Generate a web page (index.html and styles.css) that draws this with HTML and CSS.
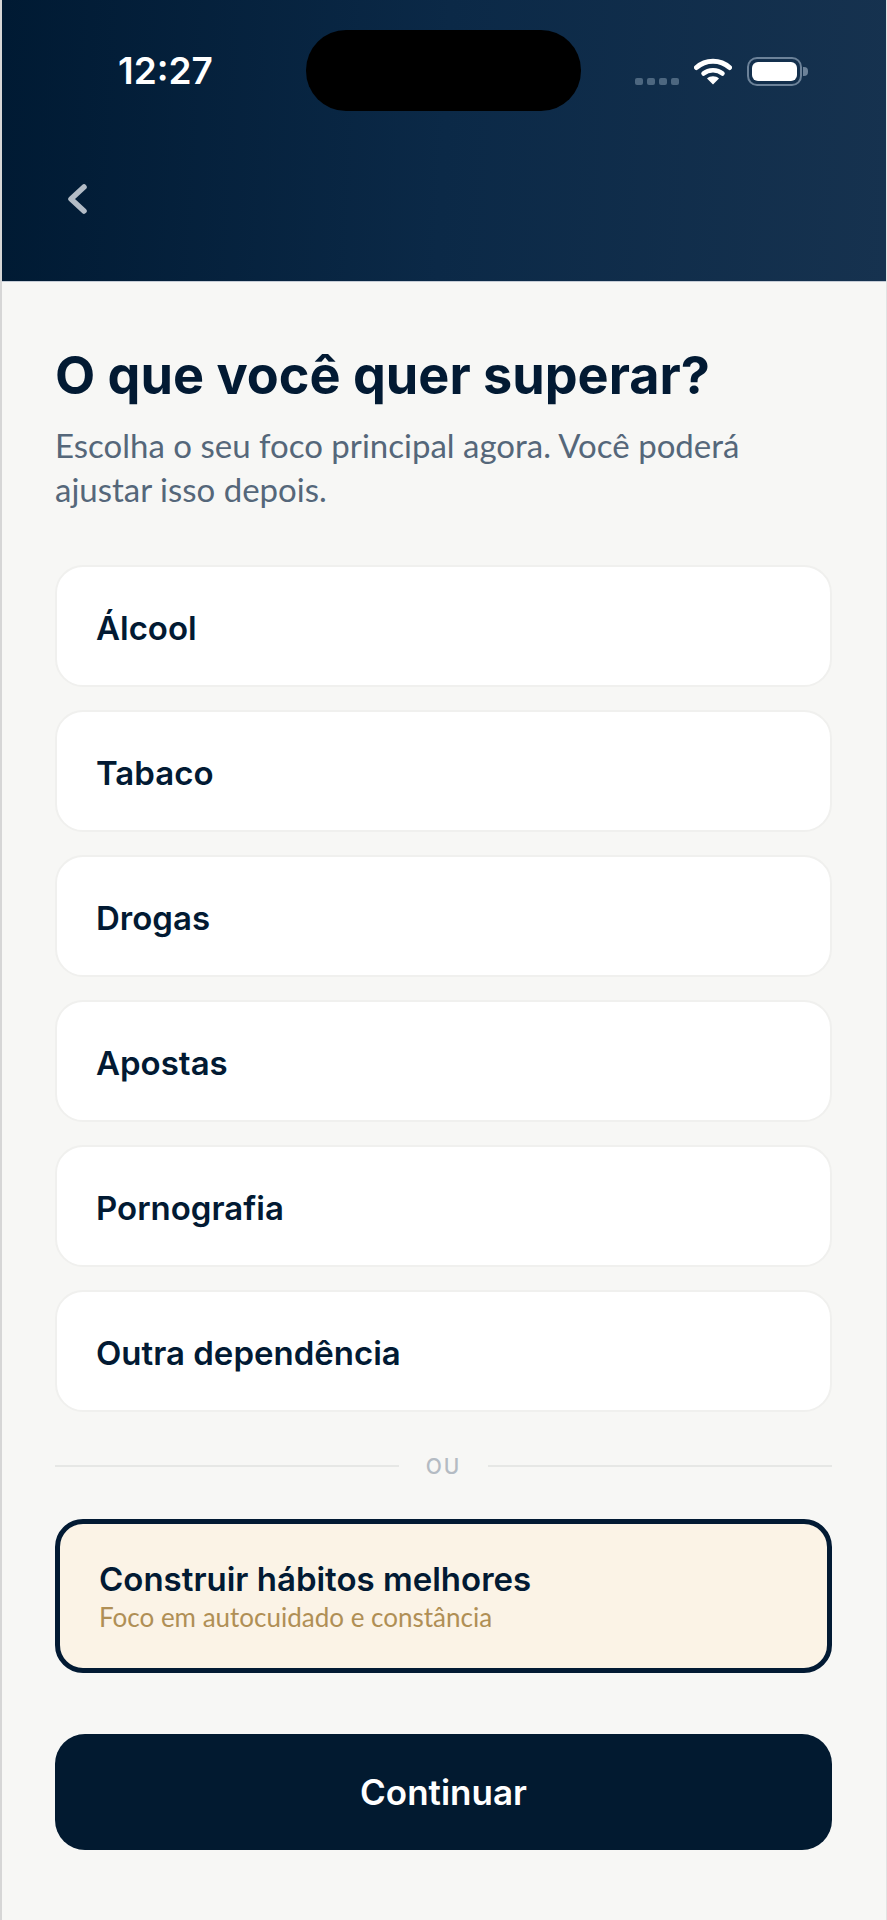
FILE: index.html
```html
<!DOCTYPE html>
<html>

    <head>
        <meta charset="UTF-8">
        <title>O que você quer superar?</title>
        <link rel="stylesheet" href="styles.css">
    </head>
    <body>
        <div class="page">
            <header class="top">
                <div class="status">
                    <span class="time">12:27</span>
                    <div class="island"></div>
                    <div class="status-icons">
                        <div class="signal">
                            <i></i><i></i><i></i><i></i>
                        </div>
                        <svg class="wifi" width="38" height="28" viewBox="0 0 38 28">
                            <path d="M2.5 10.5C11.5 2 26.5 2 35.5 10.5" fill="none" stroke="#fff" stroke-width="5" stroke-linecap="round"/>
                            <path d="M9.5 16.5C14.5 12 23.5 12 28.5 16.5" fill="none" stroke="#fff" stroke-width="4.5" stroke-linecap="round"/>
                            <path d="M13 21.5C16 18.5 22 18.5 25 21.5L19 27.5Z" fill="#fff"/>
                        </svg>
                        <div class="battery">
                            <div class="battery-fill"></div>
                        </div>
                    </div>
                </div>
                <button class="back">
                    <svg width="24" height="36" viewBox="0 0 24 36">
                        <path d="M19 6L6 18L19 30" fill="none" stroke="#b3bcc6" stroke-width="5.5" stroke-linecap="round" stroke-linejoin="round"/>
                    </svg>
                </button>
            </header>

            <main class="content">
                <h1 class="title">O que você quer superar?</h1>
                <p class="subtitle">Escolha o seu foco principal agora. Você poderá ajustar isso depois.</p>

                <ul class="options">
                    <li class="option">Álcool</li>
                    <li class="option">Tabaco</li>
                    <li class="option">Drogas</li>
                    <li class="option">Apostas</li>
                    <li class="option">Pornografia</li>
                    <li class="option">Outra dependência</li>
                </ul>

                <div class="divider"><span>OU</span></div>

                <div class="habit">
                    <div class="habit-title">Construir hábitos melhores</div>
                    <div class="habit-sub">Foco em autocuidado e constância</div>
                </div>

                <button class="continue">Continuar</button>
            </main>
        </div>
    </body>

</html>
```

FILE: styles.css
```css
* {
    padding: 0;
    margin: 0;
    box-sizing: border-box;
}

ul,
li {
    list-style: none;
}

body {
    background-color: #f7f7f5;
    font-family: Inter, "Liberation Sans", sans-serif;
}

.page {
    width: 887px;
    height: 1920px;
    border-left: 2px solid #d6d6d6;
    border-right: 1px solid #e2e2e2;
    overflow: hidden;
}

.top {
    height: 282px;
    padding-top: 30px;
    background: linear-gradient(93deg, #001a33 0%, #0b2947 50%, #16324f 100%);
    border-bottom: 1px solid #c5ccd6;
}

.status {
    display: flex;
    align-items: flex-start;
    height: 81px;
}

.time {
    width: 304px;
    padding-left: 116px;
    padding-top: 19px;
    font-size: 37px;
    line-height: 44px;
    font-weight: 600;
    color: #fff;
}

.island {
    width: 275px;
    height: 81px;
    background-color: #000;
    border-radius: 40px;
}

.status-icons {
    display: flex;
    align-items: flex-start;
    padding-left: 54px;
    padding-top: 27px;
}

.signal {
    display: flex;
    gap: 4px;
    margin-top: 21px;
    margin-right: 15px;
}

.signal i {
    width: 8px;
    height: 7px;
    background-color: #4d6780;
    border-radius: 2px;
}

.wifi {
    margin-right: 15px;
}

.battery {
    position: relative;
    width: 55px;
    height: 29px;
    padding: 3px;
    border: 2px solid #6c8299;
    border-radius: 10px;
}

.battery::after {
    content: "";
    position: absolute;
    right: -8px;
    top: 8px;
    width: 5px;
    height: 9px;
    background-color: #6c8299;
    border-radius: 0 4px 4px 0;
}

.battery-fill {
    height: 100%;
    background-color: #fff;
    border-radius: 6px;
}

.back {
    display: block;
    margin-top: 70px;
    margin-left: 63px;
    background: none;
    border: none;
}

.content {
    padding: 63px 54px 0 53px;
}

.title {
    font-size: 52.2px;
    line-height: 60px;
    font-weight: 700;
    color: #021a33;
}

.subtitle {
    width: 700px;
    margin-top: 18px;
    font-family: Lato, "Liberation Sans", sans-serif;
    font-size: 33px;
    line-height: 44px;
    color: #55677a;
}

.options {
    display: flex;
    flex-direction: column;
    gap: 23px;
    margin-top: 54px;
}

.option {
    display: flex;
    align-items: center;
    height: 122px;
    padding-left: 39px;
    padding-top: 4px;
    background-color: #fff;
    border: 2px solid #f0f0ee;
    border-radius: 28px;
    font-size: 33px;
    font-weight: 600;
    color: #021a33;
}

.divider {
    display: flex;
    align-items: center;
    gap: 27px;
    margin-top: 40px;
    height: 28px;
    font-size: 21px;
    font-weight: 500;
    letter-spacing: 2px;
    color: #b4bbc3;
}

.divider::before,
.divider::after {
    content: "";
    flex: 1;
    height: 2px;
    background-color: #e6e7e5;
}

.habit {
    display: flex;
    flex-direction: column;
    justify-content: center;
    height: 154px;
    margin-top: 39px;
    padding-left: 39px;
    background-color: #fbf3e6;
    border: 5px solid #021a33;
    border-radius: 28px;
}

.habit-title {
    font-size: 33px;
    line-height: 40px;
    font-weight: 600;
    color: #021a33;
}

.habit-sub {
    margin-top: 2px;
    font-family: Lato, "Liberation Sans", sans-serif;
    font-size: 26px;
    line-height: 32px;
    color: #b08f55;
}

.continue {
    display: block;
    width: 100%;
    height: 116px;
    margin-top: 61px;
    background-color: #021a30;
    border: none;
    border-radius: 30px;
    font-family: Inter, "Liberation Sans", sans-serif;
    font-size: 35px;
    font-weight: 600;
    color: #fff;
}
```
